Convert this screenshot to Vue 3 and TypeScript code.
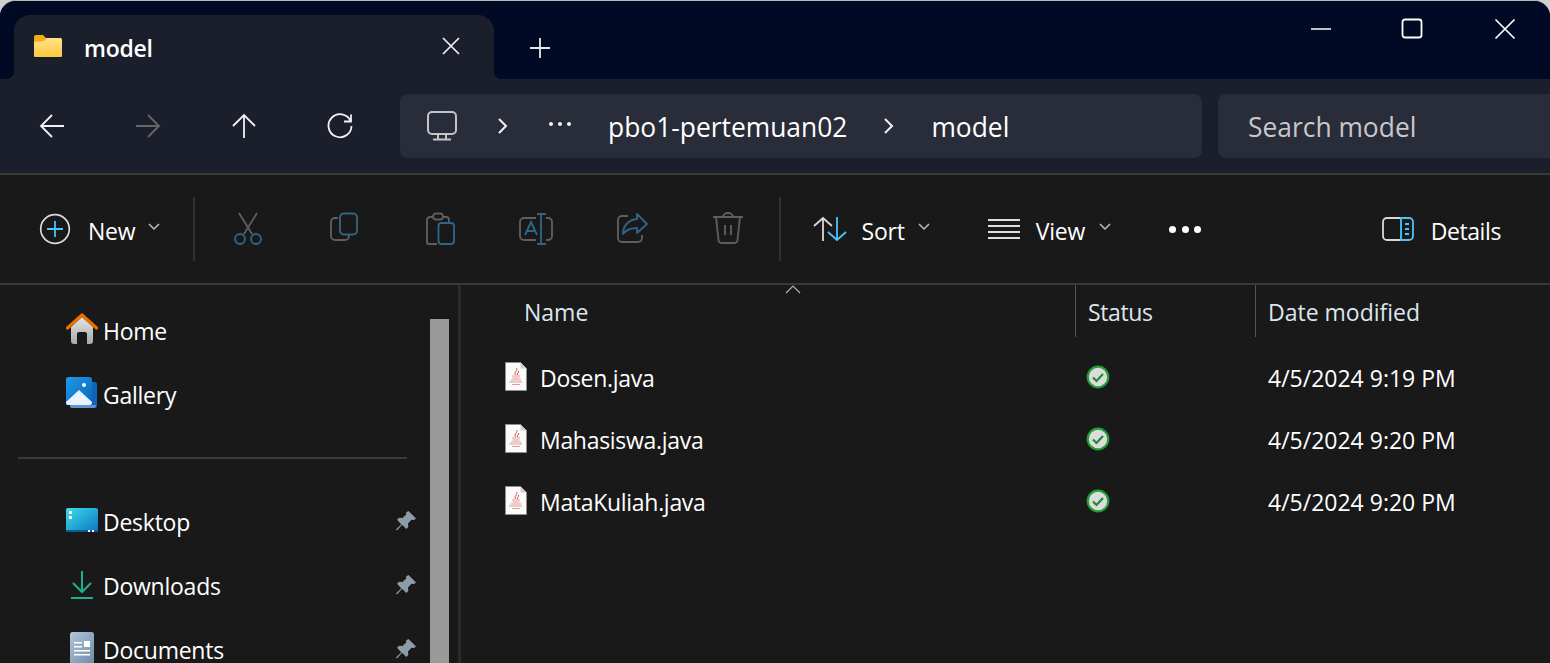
<script setup lang="ts">
interface FileRow {
  name: string;
  modified: string;
}

interface NavItem {
  label: string;
  kind: string;
  pinned: boolean;
}

const crumbs: string[] = ["pbo1-pertemuan02", "model"];

const topPlaces: NavItem[] = [
  { label: "Home", kind: "home", pinned: false },
  { label: "Gallery", kind: "gallery", pinned: false },
];

const pinnedPlaces: NavItem[] = [
  { label: "Desktop", kind: "desktop", pinned: true },
  { label: "Downloads", kind: "downloads", pinned: true },
  { label: "Documents", kind: "documents", pinned: true },
];

const files: FileRow[] = [
  { name: "Dosen.java", modified: "4/5/2024 9:19 PM" },
  { name: "Mahasiswa.java", modified: "4/5/2024 9:20 PM" },
  { name: "MataKuliah.java", modified: "4/5/2024 9:20 PM" },
];
</script>

<template>
  <div class="window">
    <header class="titlebar">
      <div class="tab">
        <svg class="tab-folder" width="30" height="24" viewBox="0 0 30 24">
          <defs>
            <linearGradient id="folderFill" x1="0" y1="0" x2="0" y2="1">
              <stop offset="0" stop-color="#ffe38a" />
              <stop offset="1" stop-color="#fdc93f" />
            </linearGradient>
          </defs>
          <path d="M1 3a2 2 0 0 1 2-2h7l3 3h14a2 2 0 0 1 2 2v4H1z" fill="#f6ac17" />
          <path d="M1 8l10-1 3-3h13a2 2 0 0 1 2 2v16a1 1 0 0 1-1 1H2a1 1 0 0 1-1-1z" fill="url(#folderFill)" />
        </svg>
        <span class="tab-title">model</span>
        <svg class="tab-close" width="20" height="20" viewBox="0 0 20 20">
          <path d="M2 2l16 16M18 2L2 18" stroke="#f2f2f2" stroke-width="1.7" fill="none" />
        </svg>
      </div>
      <svg class="tab-add" width="22" height="22" viewBox="0 0 22 22">
        <path d="M11 1v20M1 11h20" stroke="#e8e8e8" stroke-width="1.8" fill="none" />
      </svg>
      <div class="win-controls">
        <div class="win-btn">
          <svg width="22" height="22" viewBox="0 0 22 22"><path d="M1 11h20" stroke="#fff" stroke-width="1.7" /></svg>
        </div>
        <div class="win-btn">
          <svg width="22" height="22" viewBox="0 0 22 22"><rect x="1.5" y="1.5" width="19" height="18" rx="2.5" stroke="#fff" stroke-width="1.8" fill="none" /></svg>
        </div>
        <div class="win-btn">
          <svg width="22" height="22" viewBox="0 0 22 22"><path d="M1.5 1.5l19 19M20.5 1.5l-19 19" stroke="#fff" stroke-width="1.7" fill="none" /></svg>
        </div>
      </div>
    </header>

    <section class="navbar">
      <div class="nav-arrows">
        <button class="nav-btn">
          <svg width="26" height="26" viewBox="0 0 26 26"><path d="M25 13H2M13 2L2 13l11 11" stroke="#f2f2f2" stroke-width="1.8" fill="none" /></svg>
        </button>
        <button class="nav-btn">
          <svg width="26" height="26" viewBox="0 0 26 26"><path d="M1 13h23M13 2l11 11-11 11" stroke="#666" stroke-width="1.8" fill="none" /></svg>
        </button>
        <button class="nav-btn">
          <svg width="26" height="26" viewBox="0 0 26 26"><path d="M13 25V2M2 13L13 2l11 11" stroke="#f2f2f2" stroke-width="1.8" fill="none" /></svg>
        </button>
        <button class="nav-btn">
          <svg width="26" height="26" viewBox="0 0 26 26"><path d="M23.5 8A11.5 11.5 0 1 0 24.5 13M24 1.5V8.5h-7" stroke="#f2f2f2" stroke-width="1.8" fill="none" /></svg>
        </button>
      </div>
      <div class="address">
        <svg class="addr-pc" width="30" height="30" viewBox="0 0 30 30">
          <rect x="1" y="1" width="28" height="22" rx="4" stroke="#c4c4c4" stroke-width="2" fill="none" />
          <path d="M11 23v5M19 23v5M6 28.5h18" stroke="#c4c4c4" stroke-width="2" fill="none" />
        </svg>
        <svg class="addr-chev first" width="12" height="18" viewBox="0 0 12 18"><path d="M2 2l7 7-7 7" stroke="#f2f2f2" stroke-width="2" fill="none" /></svg>
        <div class="addr-dots"><i></i><i></i><i></i></div>
        <template v-for="(crumb, i) in crumbs" :key="crumb">
          <span class="crumb">{{ crumb }}</span>
          <svg v-if="i < crumbs.length - 1" class="addr-chev" width="12" height="18" viewBox="0 0 12 18"><path d="M2 2l7 7-7 7" stroke="#f2f2f2" stroke-width="2" fill="none" /></svg>
        </template>
      </div>
      <div class="search">Search model</div>
    </section>

    <section class="toolbar">
      <div class="tool-group">
        <svg width="32" height="32" viewBox="0 0 32 32">
          <circle cx="16" cy="16" r="14.3" stroke="#dcdcdc" stroke-width="1.7" fill="none" />
          <path d="M16 8v16M8 16h16" stroke="#4cc2ff" stroke-width="1.8" fill="none" />
        </svg>
        <span class="tool-label new-label">New</span>
        <svg class="caret" width="14" height="10" viewBox="0 0 14 10"><path d="M2 2l5 5 5-5" stroke="#bdbdbd" stroke-width="1.5" fill="none" /></svg>
      </div>
      <div class="tool-sep"></div>
      <div class="tool-icons">
        <div class="tool-cell">
          <svg width="30" height="34" viewBox="0 0 30 34">
            <path d="M6 1l13 21M24 1L11 22" stroke="#5e5e5e" stroke-width="1.8" fill="none" />
            <circle cx="7" cy="27" r="5" stroke="#2f6484" stroke-width="1.9" fill="none" />
            <circle cx="23" cy="27" r="5" stroke="#2f6484" stroke-width="1.9" fill="none" />
          </svg>
        </div>
        <div class="tool-cell">
          <svg width="30" height="30" viewBox="0 0 30 30">
            <path d="M9 6H6a4 4 0 0 0-4 4v14a4 4 0 0 0 4 4h10a4 4 0 0 0 4-4v-1" stroke="#5e5e5e" stroke-width="1.9" fill="none" />
            <rect x="11" y="1.500" width="17" height="21" rx="4" stroke="#2f6484" stroke-width="1.9" fill="none" />
          </svg>
        </div>
        <div class="tool-cell">
          <svg width="30" height="34" viewBox="0 0 30 34">
            <path d="M8 5H5a3 3 0 0 0-3 3v22a2 2 0 0 0 2 2h8M18 5h3a3 3 0 0 1 3 3v2" stroke="#5e5e5e" stroke-width="1.9" fill="none" />
            <rect x="8" y="1.500" width="10" height="6" rx="3" stroke="#5e5e5e" stroke-width="1.9" fill="none" />
            <rect x="13.500" y="11" width="15.500" height="21" rx="3" stroke="#2f6484" stroke-width="1.9" fill="none" />
          </svg>
        </div>
        <div class="tool-cell">
          <svg width="34" height="34" viewBox="0 0 34 34">
            <path d="M17 6H5a4 4 0 0 0-4 4v14a4 4 0 0 0 4 4h12M27 6h2a4 4 0 0 1 4 4v14a4 4 0 0 1-4 4h-2" stroke="#5e5e5e" stroke-width="1.9" fill="none" />
            <path d="M18 2h9M22 2v30M18 32h9M6 23l6-13 6 13M8 19h8" stroke="#2f6484" stroke-width="1.9" fill="none" />
          </svg>
        </div>
        <div class="tool-cell">
          <svg width="32" height="32" viewBox="0 0 32 32">
            <path d="M12 4H6a4 4 0 0 0-4 4v18a4 4 0 0 0 4 4h16a4 4 0 0 0 4-4v-3" stroke="#5e5e5e" stroke-width="1.9" fill="none" />
            <path d="M21 2l10 10-10 9v-5c-7 0-11 2-14 6 0-8 5-14 14-15z" stroke="#2f6484" stroke-width="1.9" fill="none" stroke-linejoin="round" />
          </svg>
        </div>
        <div class="tool-cell">
          <svg width="30" height="32" viewBox="0 0 30 32">
            <path d="M0 5h30M10 5a5 4 0 0 1 10 0M3 5l2.500 23a3 3 0 0 0 3 3h13a3 3 0 0 0 3-3L27 5M12 13v10M18 13v10" stroke="#5e5e5e" stroke-width="1.9" fill="none" />
          </svg>
        </div>
      </div>
      <div class="tool-sep after-icons"></div>
      <div class="tool-group sort">
        <svg width="34" height="26" viewBox="0 0 34 26">
          <path d="M10 25V2M1 10l9-8 9 8" stroke="#d8d8d8" stroke-width="1.8" fill="none" />
          <path d="M24 1v23M15 16l9 8 9-8" stroke="#4cc2ff" stroke-width="1.8" fill="none" />
        </svg>
        <span class="tool-label">Sort</span>
        <svg class="caret" width="14" height="10" viewBox="0 0 14 10"><path d="M2 2l5 5 5-5" stroke="#bdbdbd" stroke-width="1.5" fill="none" /></svg>
      </div>
      <div class="tool-group view">
        <svg width="32" height="22" viewBox="0 0 32 22">
          <path d="M0 2h32M0 8h32M0 14h32M0 20h32" stroke="#dedede" stroke-width="1.8" fill="none" />
        </svg>
        <span class="tool-label view-label">View</span>
        <svg class="caret view-caret" width="14" height="10" viewBox="0 0 14 10"><path d="M2 2l5 5 5-5" stroke="#bdbdbd" stroke-width="1.5" fill="none" /></svg>
      </div>
      <div class="more-dots"><i></i><i></i><i></i></div>
      <div class="tool-group details">
        <svg width="32" height="24" viewBox="0 0 32 24">
          <path d="M19 1H5a4 4 0 0 0-4 4v14a4 4 0 0 0 4 4h14" stroke="#d8d8d8" stroke-width="1.8" fill="none" />
          <path d="M19 1h8a4 4 0 0 1 4 4v14a4 4 0 0 1-4 4h-8z" stroke="#4cc2ff" stroke-width="1.8" fill="none" />
          <path d="M23 7h4M23 12h4M23 17h4" stroke="#4cc2ff" stroke-width="1.8" fill="none" />
        </svg>
        <span class="tool-label details-label">Details</span>
      </div>
    </section>

    <main class="content">
      <aside class="sidebar">
        <div class="tree">
          <div v-for="item in topPlaces" :key="item.label" class="tree-row">
            <svg v-if="item.kind === 'home'" class="tree-icon" width="32" height="32" viewBox="0 0 32 32">
              <defs>
                <linearGradient id="homeWall" x1="0" y1="0" x2="0" y2="1">
                  <stop offset="0" stop-color="#e4e4e4" />
                  <stop offset="1" stop-color="#a8a8a8" />
                </linearGradient>
              </defs>
              <path d="M5 14L16 4l11 10v14a3 3 0 0 1-3 3h-3V21a2 2 0 0 0-2-2h-6a2 2 0 0 0-2 2v10H8a3 3 0 0 1-3-3z" fill="url(#homeWall)" />
              <path d="M1.500 15L16 2l14.500 13" stroke="#ec7200" stroke-width="3.200" fill="none" stroke-linecap="round" stroke-linejoin="round" />
            </svg>
            <svg v-else class="tree-icon" width="32" height="32" viewBox="0 0 32 32">
              <defs>
                <linearGradient id="galleryBack" x1="0" y1="0" x2="1" y2="1">
                  <stop offset="0" stop-color="#1c9be8" />
                  <stop offset="1" stop-color="#0b62bd" />
                </linearGradient>
              </defs>
              <path d="M26 5h3a2 2 0 0 1 2 2v22a2 2 0 0 1-2 2H6a2 2 0 0 1-2-2v-1h22z" fill="#0f63b8" />
              <path d="M4 28h26v1a2 2 0 0 1-2 2H6a2 2 0 0 1-2-2z" fill="#5b94d0" />
              <rect x="0" y="0" width="26" height="28" rx="2.500" fill="url(#galleryBack)" />
              <path d="M0 25l13-12 13 12v1a2 2 0 0 1-2 2H2a2 2 0 0 1-2-2z" fill="#e8f3fd" />
              <circle cx="18" cy="8" r="2" fill="#fff" />
            </svg>
            <span class="tree-label">{{ item.label }}</span>
          </div>
          <div class="tree-divider"></div>
          <div v-for="item in pinnedPlaces" :key="item.label" class="tree-row">
            <svg v-if="item.kind === 'desktop'" class="tree-icon" width="32" height="32" viewBox="0 0 32 32">
              <defs>
                <linearGradient id="desktopFill" x1="0" y1="0" x2="1" y2="1">
                  <stop offset="0" stop-color="#3adfe6" />
                  <stop offset="1" stop-color="#0e74c4" />
                </linearGradient>
              </defs>
              <rect x="0" y="4" width="32" height="24" rx="2" fill="url(#desktopFill)" />
              <rect x="0" y="26" width="32" height="2" fill="#0c5a96" />
              <path d="M3 7h3v3H3zM3 12h3v3H3zM22 26h2v2h-2zM26 26h2v2h-2z" fill="#fff" />
            </svg>
            <svg v-else-if="item.kind === 'downloads'" class="tree-icon" width="32" height="32" viewBox="0 0 32 32">
              <path d="M16 3v21M7 15l9 9 9-9M5 30h22" stroke="#1fae93" stroke-width="2" fill="none" />
            </svg>
            <svg v-else class="tree-icon" width="32" height="32" viewBox="0 0 32 32">
              <defs>
                <linearGradient id="docFill" x1="0" y1="0" x2="1" y2="1">
                  <stop offset="0" stop-color="#b3c6da" />
                  <stop offset="1" stop-color="#6f8aa8" />
                </linearGradient>
              </defs>
              <rect x="4" y="0" width="24" height="32" rx="2.500" fill="url(#docFill)" />
              <path d="M8 10h8v1.500H8zM8 14h8v1.500H8zM8 18h16v1.500H8zM8 22h16v1.500H8zM18 9h6v6h-6z" fill="#fff" />
            </svg>
            <span class="tree-label">{{ item.label }}</span>
            <svg v-if="item.pinned" class="pin" width="22" height="22" viewBox="0 0 22 22">
              <path d="M13.500 1l7.500 7.500-2 1.500-2.500-.3-3.500 3.800.3 3.500-2 2L7 14.800 2 20.500 1 19.500l5.200-5.300L2 9.800l2-2 3.500.3 3.800-3.500-.3-2.200z" fill="#8e9ca5" />
            </svg>
          </div>
        </div>
        <div class="scroll-track"><div class="scroll-thumb"></div></div>
      </aside>
      <div class="splitter"></div>

      <section class="list">
        <div class="list-head">
          <div class="col col-name">
            Name
            <svg class="sort-mark" width="16" height="9" viewBox="0 0 16 9"><path d="M1 8l7-7 7 7" stroke="#b0b0b0" stroke-width="1.200" fill="none" /></svg>
          </div>
          <div class="col col-status">Status</div>
          <div class="col col-date">Date modified</div>
        </div>
        <div v-for="file in files" :key="file.name" class="file-row">
          <div class="cell-name">
            <svg class="java" width="22" height="29" viewBox="0 0 22 29">
              <path d="M.5.500h15l6 6v22H.5z" fill="#fbfbfb" stroke="#8f8f8f" />
              <path d="M15.500.500v6h6z" fill="#cfcfcf" />
              <path d="M11.500 6c2 2.500-3 3.500-1 7M13.500 9c1 2-2 2-1 4" stroke="#d9534f" stroke-width="1" fill="none" />
              <path d="M7 14h8M7.500 16h7M6 18h10M4 20h13M7 22.500h8" stroke="#e59a98" stroke-width="1" fill="none" />
            </svg>
            <span class="file-name">{{ file.name }}</span>
          </div>
          <div class="cell-status">
            <svg width="24" height="24" viewBox="0 0 24 24">
              <circle cx="12" cy="12" r="10.300" fill="#dcdcdc" stroke="#21a038" stroke-width="2.200" />
              <path d="M7 12.500l3.500 3.500L17 9" stroke="#1c8a37" stroke-width="2.200" fill="none" />
            </svg>
          </div>
          <div class="cell-date">{{ file.modified }}</div>
        </div>
      </section>
    </main>
  </div>
</template>

<style>
html,
body {
  margin: 0;
  height: 100%;
  overflow: hidden;
  background: #cfcfcf;
}
</style>

<style scoped>
.window {
  height: 663px;
  box-sizing: border-box;
  display: flex;
  flex-direction: column;
  overflow: hidden;
  border-top: 1px solid #b8b8b8;
  border-radius: 16px 16px 0 0;
  background: #191919;
  font-family: "Open Sans", "Noto Sans", sans-serif;
  color: #fff;
}

.titlebar {
  height: 78px;
  flex: none;
  display: flex;
  padding: 14px 0 0 14px;
  box-sizing: border-box;
  background: #000a24;
}

.tab {
  position: relative;
  width: 480px;
  height: 64px;
  box-sizing: border-box;
  display: flex;
  align-items: center;
  padding: 0 33px 0 19px;
  background: #1a1f2b;
  border-radius: 16px 16px 0 0;
}

.tab::before,
.tab::after {
  content: "";
  position: absolute;
  bottom: 0;
  width: 8px;
  height: 8px;
}

.tab::before {
  left: -8px;
  background: radial-gradient(circle at 0 0, transparent 8px, #1a1f2b 8.5px);
}

.tab::after {
  right: -8px;
  background: radial-gradient(circle at 100% 0, transparent 8px, #1a1f2b 8.5px);
}

.tab-folder {
  margin-top: -2px;
}

.tab-title {
  margin-left: 21px;
  padding-top: 2px;
  font-size: 23px;
  font-weight: 600;
  letter-spacing: -0.25px;
  flex: 1;
}

.tab-close {
  margin-top: -3px;
}

.tab-add {
  margin: 22px 0 0 35px;
}

.win-controls {
  margin-left: auto;
  display: flex;
  align-self: flex-start;
}

.win-btn {
  height: 28px;
  display: flex;
  justify-content: center;
  align-items: center;
}

.win-btn:nth-child(1) {
  width: 86px;
}

.win-btn:nth-child(2) {
  width: 96px;
}

.win-btn:nth-child(3) {
  width: 90px;
}

.navbar {
  height: 94px;
  flex: none;
  display: flex;
  align-items: center;
  padding-bottom: 1px;
  box-sizing: border-box;
  background: #1a1f2b;
}

.nav-arrows {
  width: 400px;
  flex: none;
  display: flex;
  padding-left: 4px;
  box-sizing: border-box;
}

.nav-btn {
  width: 96px;
  height: 40px;
  padding: 0;
  border: 0;
  background: none;
  display: flex;
  justify-content: center;
  align-items: center;
}

.address {
  width: 802px;
  height: 64px;
  flex: none;
  display: flex;
  align-items: center;
  box-sizing: border-box;
  padding-left: 27px;
  background: #282d39;
  border-radius: 8px;
  font-size: 26.4px;
}

.addr-pc {
  margin-right: 40px;
}

.addr-chev {
  margin: 0 36px 0 36px;
}

.addr-chev.first {
  margin: 0;
}

.addr-dots {
  margin: -4px 37px 0 40px;
  display: flex;
  gap: 5px;
}

.addr-dots i {
  width: 4px;
  height: 4px;
  border-radius: 50%;
  background: #f2f2f2;
}

.crumb {
  white-space: nowrap;
  padding-top: 2px;
}

.search {
  flex: 1;
  height: 64px;
  margin-left: 16px;
  padding: 2px 0 0 30px;
  box-sizing: border-box;
  display: flex;
  align-items: center;
  background: #282d39;
  border-radius: 8px 0 0 8px;
  font-size: 26.4px;
  color: #c8c8cc;
}

.toolbar {
  height: 112px;
  flex: none;
  display: flex;
  align-items: center;
  box-sizing: border-box;
  padding-left: 39px;
  border-top: 2px solid #3a3a3a;
  border-bottom: 2px solid #3a3a3a;
  background: #191919;
}

.tool-group {
  display: flex;
  align-items: center;
  flex: none;
}

.tool-label {
  padding-top: 3px;
  font-size: 23px;
  letter-spacing: -0.2px;
  margin-left: 14px;
}

.new-label {
  margin-left: 17px;
}

.view-label {
  margin-left: 16px;
}

.details-label {
  margin-left: 17px;
  letter-spacing: -0.4px;
}

.caret {
  margin-left: 12px;
  margin-top: -4px;
}

.view-caret {
  margin-left: 13px;
}

.tool-sep {
  width: 2px;
  height: 64px;
  margin-left: 32px;
  background: #303030;
}

.tool-icons {
  display: flex;
  margin-left: 5px;
}

.tool-cell {
  width: 96px;
  display: flex;
  justify-content: center;
}

.tool-sep.after-icons {
  margin-left: 3px;
}

.sort {
  margin-left: 32px;
}

.view {
  margin-left: 57px;
}

.more-dots {
  margin-left: 57px;
  display: flex;
  gap: 5.5px;
}

.more-dots i {
  width: 7px;
  height: 7px;
  border-radius: 50%;
  background: #fff;
}

.details {
  margin-left: auto;
  margin-right: 49px;
}

.content {
  flex: 1;
  min-height: 0;
  display: flex;
}

.sidebar {
  width: 458px;
  flex: none;
  display: flex;
}

.tree {
  width: 430px;
  flex: none;
  padding-top: 14px;
}

.tree-row {
  height: 64px;
  display: flex;
  align-items: center;
  padding-left: 66px;
  font-size: 23px;
}

.tree-icon {
  flex: none;
  margin-top: -4px;
}

.tree-label {
  margin-left: 5px;
  line-height: 1;
  letter-spacing: -0.25px;
}

.pin {
  margin-left: auto;
  margin-right: 13px;
  margin-top: -2px;
}

.tree-divider {
  height: 2px;
  margin: 30px 23px 31px 18px;
  background: #3a3a3a;
}

.scroll-track {
  width: 19px;
  padding-top: 34px;
}

.scroll-thumb {
  height: 100%;
  background: #999;
}

.splitter {
  width: 3px;
  flex: none;
  background: #2a2a2a;
}

.list {
  flex: 1;
  min-width: 0;
  font-size: 23px;
}

.list-head {
  height: 52px;
  display: flex;
  color: #dde6ee;
}

.col {
  display: flex;
  align-items: center;
  box-sizing: border-box;
  position: relative;
  padding-top: 2px;
}

.col-name {
  width: 614px;
  padding-left: 63px;
}

.col-status {
  width: 180px;
  padding-left: 12px;
  border-left: 1px solid #555;
  letter-spacing: -0.4px;
}

.col-date {
  flex: 1;
  padding-left: 12px;
  border-left: 1px solid #555;
}

.sort-mark {
  position: absolute;
  left: 324px;
  top: 0;
}

.file-row {
  height: 62px;
  display: flex;
  align-items: center;
  position: relative;
  top: 10px;
}

.cell-name {
  width: 614px;
  display: flex;
  align-items: center;
  padding-left: 44px;
  box-sizing: border-box;
}

.java {
  margin: -4px 13px 0 0;
  flex: none;
}

.file-name {
  letter-spacing: -0.3px;
}

.cell-status {
  width: 180px;
  padding-left: 11px;
  margin-top: -2px;
  box-sizing: border-box;
  display: flex;
}

.cell-date {
  padding-left: 13px;
  white-space: nowrap;
}
</style>
